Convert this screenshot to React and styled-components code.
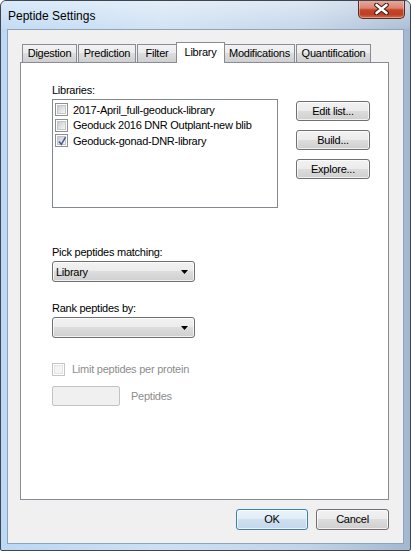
import React from 'react';
import styled, { createGlobalStyle, css } from 'styled-components';

const Global = createGlobalStyle`
    html, body {
        margin: 0;
        padding: 0;
        background: #ffffff;
    }
    body {
        font-family: "Liberation Sans", Arial, sans-serif;
        font-size: 11px;
        letter-spacing: -0.25px;
        color: #000;
    }
`;

const Window = styled.div`
    box-sizing: border-box;
    width: 411px;
    height: 551px;
    display: flex;
    flex-direction: column;
    border: 1px solid #3d4550;
    border-radius: 6px 6px 2px 2px;
    background: linear-gradient(to right, #bcd8f4 0%, #cde0f3 40%, #c0d3e8 75%, #a3b8d0 100%);
    overflow: hidden;
`;

const TitleBar = styled.div`
    height: 28px;
    flex: none;
    display: flex;
    align-items: flex-start;
    justify-content: space-between;
    padding-left: 7px;
    background: linear-gradient(to bottom, rgba(255,255,255,0.45), rgba(255,255,255,0.1));
`;

const Title = styled.div`
    font-size: 12px;
    letter-spacing: 0;
    line-height: 14px;
    margin-top: 8px;
`;

const CloseButton = styled.div`
    width: 47px;
    height: 19px;
    margin-right: 5px;
    margin-top: -1px;
    box-sizing: border-box;
    border: 1px solid #5c2a22;
    border-top: none;
    border-radius: 0 0 5px 5px;
    background: linear-gradient(to bottom, #e9ad9f 0%, #d98470 45%, #c7442a 55%, #bd3f25 80%, #d66a48 100%);
    box-shadow: inset 0 0 0 1px rgba(255,255,255,0.35);
    display: flex;
    align-items: center;
    justify-content: center;
`;

const Client = styled.div`
    flex: 1;
    margin: 0 6px 6px 6px;
    border: 1px solid #8fa3b8;
    background: #f0f0f0;
    display: flex;
    flex-direction: column;
    padding: 12px 14px 13px 12px;
`;

const TabStrip = styled.div`
    height: 20px;
    display: flex;
    align-items: flex-end;
    padding-left: 2px;
    position: relative;
    z-index: 1;
`;

const Tab = styled.div`
    box-sizing: border-box;
    width: ${({ w }) => w}px;
    height: 18px;
    margin-right: 1px;
    border: 1px solid #898c95;
    border-bottom: none;
    background: linear-gradient(to bottom, #f2f2f2 0%, #ebebeb 50%, #dddddd 50%, #cfcfcf 100%);
    line-height: 17px;
    text-align: center;
    white-space: nowrap;
    ${({ active }) => active && css`
        height: 21px;
        margin: 0 -1px -1px -2px;
        background: #ffffff;
        line-height: 18px;
        position: relative;
        z-index: 1;
    `}
`;

const Panel = styled.div`
    flex: 1;
    border: 1px solid #898c95;
    background: #ffffff;
    padding: 21px 0 0 31px;
    display: flex;
    flex-direction: column;
    align-items: flex-start;
`;

const Label = styled.div`
    line-height: 13px;
    margin-bottom: ${({ gap }) => gap || 0}px;
    margin-top: ${({ top }) => top || 0}px;
    color: ${({ disabled }) => (disabled ? '#8d8d8d' : '#000')};
`;

const LibraryRow = styled.div`
    display: flex;
    align-items: flex-start;
`;

const ListBox = styled.div`
    box-sizing: border-box;
    width: 226px;
    height: 109px;
    border: 1px solid #828790;
    background: #fff;
    padding: 2px 2px;
`;

const ListItem = styled.div`
    height: 15.5px;
    display: flex;
    align-items: center;
    gap: 5px;
    white-space: nowrap;
`;

const Box = styled.div`
    box-sizing: border-box;
    width: 13px;
    height: 13px;
    flex: none;
    border: 1px solid ${({ disabled }) => (disabled ? '#c5c5c5' : '#8e8f8f')};
    padding: 1px;
    background: #fff;
    position: relative;
    &::before {
        content: '';
        display: block;
        width: 100%;
        height: 100%;
        box-sizing: border-box;
        background: ${({ disabled }) => (disabled
            ? '#f4f4f4'
            : 'linear-gradient(135deg, #c6cad0 0%, #e3e5e8 60%, #f6f6f6 100%)')};
        border: 1px solid ${({ disabled }) => (disabled ? '#e3e3e3' : '#c2c5ca')};
    }
    svg {
        position: absolute;
        left: 1px;
        top: 0px;
    }
`;

const SideButtons = styled.div`
    display: flex;
    flex-direction: column;
    gap: 9px;
    margin: 2px 0 0 18px;
`;

const Button = styled.div`
    box-sizing: border-box;
    width: ${({ w }) => w}px;
    height: ${({ h }) => h || 20}px;
    border: 1px solid ${({ primary }) => (primary ? '#3c7fb1' : '#707070')};
    border-radius: 3px;
    background: ${({ primary }) => (primary
        ? 'linear-gradient(to bottom, #ecf4fb 0%, #dfebf6 50%, #cfe0ef 50%, #c3d8ea 100%)'
        : 'linear-gradient(to bottom, #f2f2f2 0%, #ebebeb 50%, #dddddd 50%, #cfcfcf 100%)')};
    box-shadow: inset 0 0 0 1px rgba(255,255,255,0.7);
    display: flex;
    align-items: center;
    justify-content: center;
    line-height: 13px;
`;

const Combo = styled.div`
    box-sizing: border-box;
    width: 143px;
    height: 21px;
    border: 1px solid #707070;
    border-radius: 3px;
    background: linear-gradient(to bottom, #f2f2f2 0%, #ebebeb 50%, #dddddd 50%, #cfcfcf 100%);
    box-shadow: inset 0 0 0 1px rgba(255,255,255,0.7);
    display: flex;
    align-items: center;
    justify-content: space-between;
    padding: 0 6px 0 3px;
`;

const CheckRow = styled.div`
    display: flex;
    align-items: center;
    gap: 7px;
    margin-top: 24px;
    height: 14px;
`;

const FieldRow = styled.div`
    display: flex;
    align-items: center;
    gap: 11px;
    margin-top: 10px;
`;

const TextBox = styled.div`
    box-sizing: border-box;
    width: 68px;
    height: 20px;
    border: 1px solid #c2c2c2;
    border-radius: 2px;
    background: #f0f0f0;
`;

const Footer = styled.div`
    display: flex;
    justify-content: flex-end;
    gap: 8px;
    margin-top: 9px;
`;

function Check() {
    return (
        <svg width="11" height="12" viewBox="0 0 11 12">
            <path d="M2 6.5 L4.3 9.3 L8.6 2.2" fill="none" stroke="#4c5f8f" strokeWidth="1.6" />
        </svg>
    );
}

function Arrow() {
    return (
        <svg width="7" height="4" viewBox="0 0 7 4">
            <path d="M0 0 H7 L3.5 4 Z" fill="#000" />
        </svg>
    );
}

const tabs = [
    { name: 'Digestion', w: 55 },
    { name: 'Prediction', w: 58 },
    { name: 'Filter', w: 40 },
    { name: 'Library', w: 49 },
    { name: 'Modifications', w: 71 },
    { name: 'Quantification', w: 75 },
];

const libraries = [
    { name: '2017-April_full-geoduck-library', checked: false },
    { name: 'Geoduck 2016 DNR Outplant-new blib', checked: false },
    { name: 'Geoduck-gonad-DNR-library', checked: true },
];

export default function App() {
    return (
        <>
            <Global />
            <Window>
                <TitleBar>
                    <Title>Peptide Settings</Title>
                    <CloseButton>
                        <svg width="15" height="12" viewBox="0 0 15 12">
                            <path d="M2.5 2 L12.5 10 M12.5 2 L2.5 10" stroke="#3b1c16" strokeWidth="4.6" strokeLinecap="round" />
                            <path d="M2.5 2 L12.5 10 M12.5 2 L2.5 10" stroke="#ffffff" strokeWidth="2.6" strokeLinecap="round" />
                        </svg>
                    </CloseButton>
                </TitleBar>
                <Client>
                    <TabStrip>
                        {tabs.map((t) => (
                            <Tab key={t.name} w={t.w} active={t.name === 'Library'}>{t.name}</Tab>
                        ))}
                    </TabStrip>
                    <Panel>
                        <Label gap={2}>Libraries:</Label>
                        <LibraryRow>
                            <ListBox>
                                {libraries.map((lib) => (
                                    <ListItem key={lib.name}>
                                        <Box>{lib.checked && <Check />}</Box>
                                        {lib.name}
                                    </ListItem>
                                ))}
                            </ListBox>
                            <SideButtons>
                                <Button w={74}>Edit list...</Button>
                                <Button w={74}>Build...</Button>
                                <Button w={74}>Explore...</Button>
                            </SideButtons>
                        </LibraryRow>
                        <Label top={38} gap={2}>Pick peptides matching:</Label>
                        <Combo>
                            <span>Library</span>
                            <Arrow />
                        </Combo>
                        <Label top={20} gap={2}>Rank peptides by:</Label>
                        <Combo>
                            <span />
                            <Arrow />
                        </Combo>
                        <CheckRow>
                            <Box disabled />
                            <Label disabled>Limit peptides per protein</Label>
                        </CheckRow>
                        <FieldRow>
                            <TextBox />
                            <Label disabled>Peptides</Label>
                        </FieldRow>
                    </Panel>
                    <Footer>
                        <Button w={72} h={21} primary>OK</Button>
                        <Button w={73} h={21}>Cancel</Button>
                    </Footer>
                </Client>
            </Window>
        </>
    );
}
